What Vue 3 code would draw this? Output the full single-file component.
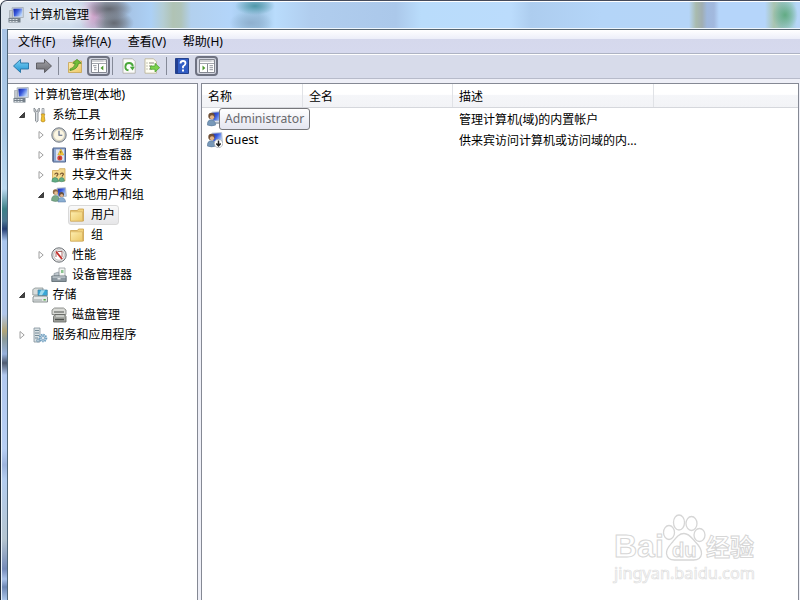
<template>
  <div class="window">
    <svg class="icon-defs" width="0" height="0" aria-hidden="true">
      <defs>
        <linearGradient id="g-blue" x1="0" y1="0" x2="0" y2="1">
          <stop offset="0" stop-color="#7cd0f4" />
          <stop offset="1" stop-color="#1f93d2" />
        </linearGradient>
        <linearGradient id="g-gray" x1="0" y1="0" x2="0" y2="1">
          <stop offset="0" stop-color="#a3a3a8" />
          <stop offset="1" stop-color="#68686e" />
        </linearGradient>
        <linearGradient id="g-folder" x1="0" y1="0" x2="1" y2="1">
          <stop offset="0" stop-color="#fdeeb0" />
          <stop offset="1" stop-color="#ecc867" />
        </linearGradient>
        <linearGradient id="g-screen" x1="0" y1="0" x2="1" y2="0.6">
          <stop offset="0" stop-color="#1420a0" />
          <stop offset="0.5" stop-color="#3a5bdc" />
          <stop offset="1" stop-color="#b8d4fb" />
        </linearGradient>
      </defs>
      <symbol id="computer" viewBox="0 0 16 16">
        <path d="M4 .8 15.300.5V10.500H5z" fill="#d5dbe3" stroke="#9aa3ae" stroke-width=".7" />
        <path d="M5.300 1.800 14.300 1.500v8H6z" fill="url(#g-screen)" />
        <path d="M1.500 3.500h3v7.500h-3z" fill="#c3c9cf" stroke="#8b939b" stroke-width=".5" />
        <path d="M.5 11h12v4.500H.5z" fill="#75808a" />
        <path d="M1.500 12h2v1h-2zm3 0h2v1h-2zm3 0h2v1h-2zM1.500 14h2v1h-2zm3 0h2v1h-2zm3 0h2v1h-2z" fill="#dce2e6" />
      </symbol>
      <symbol id="tools" viewBox="0 0 16 16">
        <path d="M2 1v3.500l1.500 1V14q1 2 2.500 0V5.500l1.300-1V1L5.800 2.500v1.800H3.700V2.500z" fill="#dde0e3" stroke="#747b82" stroke-width=".8" />
        <path d="M10 1.500h2V7h-2z" fill="#e4e6e8" stroke="#858b91" stroke-width=".7" />
        <path d="M9.200 7h3.600l-.6 2 .8 5q-2 2-4 0l.8-5z" fill="#f2c332" stroke="#b4861b" stroke-width=".7" />
      </symbol>
      <symbol id="clock" viewBox="0 0 16 16">
        <circle cx="8" cy="8" r="7.200" fill="#c0c4c8" stroke="#777e85" />
        <circle cx="8" cy="8" r="5.500" fill="#fbf6e3" stroke="#d5cba9" stroke-width=".6" />
        <path d="M8 3.800V8.300h3.300" fill="none" stroke="#4f5f83" stroke-width="1.100" />
      </symbol>
      <symbol id="events" viewBox="0 0 16 16">
        <path d="M2 1h12.500v14H2z" fill="#8fa9d3" stroke="#51648d" />
        <path d="M5 2.500h8v11H5z" fill="#dfe4ef" />
        <path d="M9.800 2 12.800 8H6.800z" fill="#ffd83b" stroke="#b88b18" stroke-width=".5" />
        <circle cx="8.800" cy="11" r="2.500" fill="#d9423c" />
        <path d="M9.800 4v2.500M8.800 9.800v2.400" stroke="#5c3518" stroke-width=".8" />
        <path d="M1 3h2M1 5h2M1 7h2M1 9h2M1 11h2M1 13h2" stroke="#39496b" stroke-width=".8" />
      </symbol>
      <symbol id="folder" viewBox="0 0 16 16">
        <path d="M1.500 3.500h7l1-1.500h5v12h-13z" fill="#f2d27c" stroke="#c9a04a" stroke-width=".8" />
        <path d="M1.500 4.800h12v9.300h-12z" fill="url(#g-folder)" stroke="#d4ae5b" stroke-width=".7" />
      </symbol>
      <symbol id="shared" viewBox="0 0 16 16">
        <path d="M1.500 3.500h6l1-1.800h5.500V14H1.500z" fill="#f4d98b" stroke="#d0aa55" stroke-width=".8" />
        <path d="M3.500 7.500Q5.500 5 7 7L5.500 9.500M9 7.500q2-2.500 3.500-.5L11 9.500" fill="none" stroke="#795832" stroke-width="1.200" />
        <path d="M.8 14.500q0-4 3.200-4t3.500 4q-3.200 1.500-6.700 0zM7.800 14q.3-3.500 2.900-3.500 2.600 0 2.800 3.500-3 1.500-5.700 0z" fill="#62ad83" stroke="#397e62" stroke-width=".5" />
      </symbol>
      <symbol id="users" viewBox="0 0 16 16">
        <path d="M6 1.200 14.500.8l.8 8.500H7z" fill="url(#g-screen)" stroke="#b0bac8" />
        <circle cx="4.500" cy="5" r="2.700" fill="#8c6845" />
        <circle cx="5" cy="6" r="1.800" fill="#e6bc90" />
        <path d="M.5 13.500Q.5 8.500 4.500 8.500q3.500 0 4 5-4 2-8 0z" fill="#79a987" stroke="#4e7963" stroke-width=".5" />
        <circle cx="10.500" cy="7.500" r="2.500" fill="#66513f" />
        <circle cx="10.700" cy="8.500" r="1.600" fill="#dfb18b" />
        <path d="M7 15q0-4.500 3.600-4.500 3.400 0 4 4.500z" fill="#8aaed2" stroke="#54779f" stroke-width=".5" />
      </symbol>
      <symbol id="user" viewBox="0 0 16 16">
        <path d="M5 1.200 14.700.7l.6 9.300H6z" fill="url(#g-screen)" stroke="#b6c2d2" />
        <path d="M8 11h6v2H8z" fill="#aab5c2" />
        <circle cx="4.500" cy="5" r="3.200" fill="#715036" />
        <circle cx="5" cy="6.300" r="2.100" fill="#e4b588" />
        <path d="M.3 14Q.3 8.800 4 8.800q4 0 4.700 5.200-4 1.800-8.400 0z" fill="#7899b9" stroke="#4e6f91" stroke-width=".5" />
      </symbol>
      <symbol id="user-disabled" viewBox="0 0 16 16">
        <use href="#user" />
        <circle cx="11.500" cy="11.500" r="4.200" fill="#fff" stroke="#9da3aa" stroke-width=".7" />
        <path d="M11.500 8.500v5M9.300 11.500l2.200 2.300 2.200-2.300" fill="none" stroke="#222" stroke-width="1.500" />
      </symbol>
      <symbol id="perf" viewBox="0 0 16 16">
        <circle cx="8" cy="8" r="7.200" fill="#e3e3e3" stroke="#6e7378" />
        <circle cx="8" cy="8" r="5.200" fill="#fff" stroke="#a2a2a2" stroke-width=".6" />
        <path d="M5 6v4M6.500 4.500h4.500V10" fill="none" stroke="#9b5a58" stroke-width=".9" />
        <path d="m5 4.500 6 7.500" stroke="#c22d29" stroke-width="1.800" />
      </symbol>
      <symbol id="device" viewBox="0 0 16 16">
        <path d="M8 1h6v9H8z" fill="#f4f6f3" stroke="#8b9196" stroke-width=".7" />
        <path d="M10 3h2.500v3H10z" fill="#8bc48f" />
        <path d="M3 6.500 7.500 5 8 9H3z" fill="#bec6cc" stroke="#7e8991" stroke-width=".6" />
        <path d="M.8 9h14.400v5.500H.8z" fill="#8b979f" stroke="#57636b" stroke-width=".8" />
        <path d="M1.500 10h13" stroke="#dce2e5" />
        <path d="M6.500 11h3v1.500h-3z" fill="#e2e6e8" />
      </symbol>
      <symbol id="storage" viewBox="0 0 16 16">
        <path d="M.8 2.500 3 1h8v7H.8z" fill="#d8dcdb" stroke="#7b8686" stroke-width=".7" />
        <path d="M6 3h9.300v5.500H6z" fill="#38a8d8" stroke="#437f9d" stroke-width=".7" />
        <path d="M9 3.300h4l-3 5H7z" fill="#9fdbef" />
        <path d="M1 10 2.500 9h12l1 1v5H1z" fill="#e5e8e8" stroke="#6f7979" stroke-width=".8" />
        <path d="M2 13h8" stroke="#9ca4a5" />
        <path d="M11.500 12h2.300v1.500h-2.300z" fill="#50ae45" />
      </symbol>
      <symbol id="disk" viewBox="0 0 16 16">
        <path d="M1 3 3.500 1h9L15 3v4.500H1z" fill="#d9dad6" stroke="#777a76" stroke-width=".8" />
        <path d="M3 5h10" stroke="#6f716d" stroke-width="1.300" />
        <path d="M2.500 9.500 4 7.500h9.500l1.500 2v5.500H2.500z" fill="#a5a7a2" stroke="#5e605c" stroke-width=".8" />
        <path d="M5 9h8" stroke="#eceeea" />
        <path d="M4 12.500h9" stroke="#4d4f4b" stroke-width="1.400" />
      </symbol>
      <symbol id="services" viewBox="0 0 16 16">
        <path d="M2 1h6v14H2z" fill="#d9e1e4" stroke="#81909a" stroke-width=".8" />
        <path d="M3 3.500h4M3 6h4M3 8.500h4M3 11h3" stroke="#6b828e" stroke-width=".9" />
        <circle cx="11" cy="11" r="3.300" fill="#c6dae8" stroke="#6f9fc0" stroke-width="2" stroke-dasharray="1.400 .8" />
        <circle cx="11" cy="11" r="1.500" fill="#fff" stroke="#6692b2" stroke-width=".7" />
        <circle cx="6" cy="13.500" r="1.500" fill="#b5cad8" stroke="#7899ae" stroke-width=".8" />
      </symbol>
      <symbol id="back" viewBox="0 0 16 16">
        <path d="M.5 8 7.500 1.500v3.500h8v6h-8v3.500z" fill="url(#g-blue)" stroke="#2472a3" stroke-width=".9" />
      </symbol>
      <symbol id="forward" viewBox="0 0 16 16">
        <path d="M15.500 8 8.500 1.500V5H.5v6h8v3.500z" fill="url(#g-gray)" stroke="#58585c" stroke-width=".9" />
      </symbol>
      <symbol id="up" viewBox="0 0 16 16">
        <path d="M1.500 4.500h4L6.800 3H14.500v11.500h-13z" fill="url(#g-folder)" stroke="#c7a24e" stroke-width=".8" />
        <path d="M3 11q4.500-1 5.200-5.500L5.800 5.300 10 1.300l4.200 3.900-2.700.2Q10.500 11.500 3 12.500z" fill="#73bd38" stroke="#40821e" stroke-width=".7" />
      </symbol>
      <symbol id="tree-pane" viewBox="0 0 16 14">
        <path d="M.5.500h15v13H.5z" fill="#fff" stroke="#858992" />
        <path d="M1 2h14M1 4.500h14" stroke="#969aa3" stroke-width=".9" />
        <path d="M7.500 5v8" stroke="#858992" />
        <path d="M2 6.700h3.500M3 8.700h2.500M3 10.700h2.500" stroke="#858992" stroke-width=".9" />
        <path d="M12.300 6.500v5L9.500 9z" fill="#4d9a2e" />
        <path d="M12.500 2h2" stroke="#fff" />
      </symbol>
      <symbol id="action-pane" viewBox="0 0 16 14">
        <path d="M.5.500h15v13H.5z" fill="#fff" stroke="#858992" />
        <path d="M1 2h14M1 4.500h14" stroke="#969aa3" stroke-width=".9" />
        <path d="M8.500 5v8" stroke="#858992" />
        <path d="M10.500 6.700H14M10.500 8.700H14M10.500 10.700H14" stroke="#858992" stroke-width=".9" />
        <path d="M3.500 6.500v5L6.300 9z" fill="#4d9a2e" />
        <path d="M12.500 2h2" stroke="#fff" />
      </symbol>
      <symbol id="refresh" viewBox="0 0 16 16">
        <path d="M2 .8h9.500L14.200 3.500v11.700H2z" fill="#fbfcfa" stroke="#a9aaa3" stroke-width=".8" />
        <path d="M7.500 12.300A3.700 3.700 0 1 1 11.800 8.500" fill="none" stroke="#4aa73b" stroke-width="1.900" />
        <path d="M8.800 8.800h5L11.500 12.500z" fill="#4aa73b" />
      </symbol>
      <symbol id="export" viewBox="0 0 16 16">
        <path d="M1 .8h8.500l3 3v11.400H1z" fill="#fffef3" stroke="#b6ae90" stroke-width=".8" />
        <path d="M2.500 5h1M2.500 8h1M2.500 11h1M5 5h5M5 8h3M5 11h3" stroke="#8a8c7c" />
        <path d="M6.500 8H11V5.300l4.600 4.400L11 14v-2.700H6.500z" fill="#7bd24c" stroke="#459c28" stroke-width=".7" />
      </symbol>
      <symbol id="help" viewBox="0 0 14 16">
        <path d="M.5.500h13v15H.5z" fill="#315dc4" stroke="#24428d" />
        <path d="M1 1h2v14H1z" fill="#233f91" />
        <path d="M5.500 5.500q0-2.500 2.500-2.500t2.500 2.200Q10.500 7 8 8.500v1.700" fill="none" stroke="#fff" stroke-width="1.800" />
        <path d="M7 11.500h2v2H7z" fill="#fff" />
      </symbol>
    </svg>

    <header class="title-bar">
      <svg class="icon"><use href="#computer" /></svg>
      <span>计算机管理</span>
    </header>

    <div class="client">
      <nav class="menu-bar">
        <span v-for="menu in menus" :key="menu" class="menu">{{ menu }}</span>
      </nav>

      <div class="toolbar">
        <svg class="icon back"><use href="#back" /></svg>
        <svg class="icon forward"><use href="#forward" /></svg>
        <i class="separator"></i>
        <svg class="icon up"><use href="#up" /></svg>
        <button class="toggle"><svg><use href="#tree-pane" /></svg></button>
        <i class="separator after-toggle"></i>
        <svg class="icon refresh"><use href="#refresh" /></svg>
        <svg class="icon export"><use href="#export" /></svg>
        <i class="separator"></i>
        <svg class="icon help"><use href="#help" /></svg>
        <button class="toggle"><svg><use href="#action-pane" /></svg></button>
      </div>

      <div class="panes">
        <aside class="tree">
          <div
            v-for="node in nodes"
            :key="node.label"
            class="node"
            :class="['level-' + node.level, { selected: node.selected }]"
          >
            <span v-if="node.level === 1 || node.level === 2" class="arrow">
              <svg v-if="node.state === 'open'" viewBox="0 0 8 8"><path d="M6.500 1.500v5h-5z" fill="#444" stroke="#222" stroke-width=".8" /></svg>
              <svg v-else-if="node.state === 'closed'" viewBox="0 0 8 8"><path d="M2 .5v7L6.200 4z" fill="#fff" stroke="#a0a0a0" /></svg>
            </span>
            <span class="node-body">
              <svg class="icon"><use :href="'#' + node.icon" /></svg>
              <span class="label">{{ node.label }}</span>
            </span>
          </div>
        </aside>

        <main class="list">
          <div class="list-row list-head">
            <span>名称</span>
            <span>全名</span>
            <span>描述</span>
            <span></span>
          </div>
          <div v-for="user in users" :key="user.name" class="list-row">
            <span class="name">
              <svg class="icon"><use :href="'#' + user.icon" /></svg>
              <span v-if="user.tip" class="tip">{{ user.name }}</span>
              <span v-else>{{ user.name }}</span>
            </span>
            <span></span>
            <span class="description">{{ user.description }}</span>
          </div>
        </main>
      </div>
    </div>

    <div class="watermark">
      <svg class="paw" viewBox="0 0 46 50">
        <ellipse cx="8" cy="18.500" rx="5.500" ry="7" />
        <ellipse cx="18" cy="8.500" rx="5.500" ry="7.500" />
        <ellipse cx="30.500" cy="9.500" rx="5.500" ry="7" />
        <ellipse cx="38.500" cy="21" rx="5.500" ry="6.500" />
        <path d="M23 19.500c5 0 7.500 4 11 8 4 4 7 7.500 6.500 12.500-.5 4-4 6-8 6h-19c-4.500 0-7.500-2.500-8-6.500-.5-5 3-8 6.500-12 3.500-4.500 6-8 11-8z" />
      </svg>
      <span class="mark bai">Bai</span>
      <span class="mark du">du</span>
      <span class="mark jingyan">经验</span>
      <span class="mark site">jingyan.baidu.com</span>
    </div>
  </div>
</template>

<script setup>
const menus = ['文件(F)', '操作(A)', '查看(V)', '帮助(H)']

const nodes = [
  { label: '计算机管理(本地)', level: 0, icon: 'computer' },
  { label: '系统工具', level: 1, icon: 'tools', state: 'open' },
  { label: '任务计划程序', level: 2, icon: 'clock', state: 'closed' },
  { label: '事件查看器', level: 2, icon: 'events', state: 'closed' },
  { label: '共享文件夹', level: 2, icon: 'shared', state: 'closed' },
  { label: '本地用户和组', level: 2, icon: 'users', state: 'open' },
  { label: '用户', level: 3, icon: 'folder', selected: true },
  { label: '组', level: 3, icon: 'folder' },
  { label: '性能', level: 2, icon: 'perf', state: 'closed' },
  { label: '设备管理器', level: 2, icon: 'device' },
  { label: '存储', level: 1, icon: 'storage', state: 'open' },
  { label: '磁盘管理', level: 2, icon: 'disk' },
  { label: '服务和应用程序', level: 1, icon: 'services', state: 'closed' }
]

const users = [
  { name: 'Administrator', icon: 'user', description: '管理计算机(域)的内置帐户', tip: true },
  { name: 'Guest', icon: 'user-disabled', description: '供来宾访问计算机或访问域的内...' }
]
</script>

<style>
body {
  overflow: hidden;
}
</style>

<style scoped>
.window {
  position: relative;
  box-sizing: border-box;
  width: 800px;
  height: 600px;
  overflow: hidden;
  padding-left: 7px;
  border-top: 1px solid #454b5b;
  border-left: 1px solid #1f2a38;
  border-top-left-radius: 7px;
  background:
    linear-gradient(#fff, #fff) 0 0 / 100% 1px no-repeat,
    linear-gradient(90deg, #e8f2fb 0 1px, transparent 1px) 0 28px / 7px 572px no-repeat,
    linear-gradient(180deg, #a9c4e6 0, #a9c9e6 100px, #bcd9f0 160px, #3c8087 180px, #4c7691 192px, #243e72 200px, #a9c6ee 212px, #b0c6ea 285px, #b1a578 302px, #8b9a99 310px, #96b1dd 325px, #4f5b70 334px, #b1c8ef 346px, #b7cff4 420px, #9db4dd 436px, #b3cdf0 450px, #b5c5d0 510px, #758bb9 540px, #a9c1e8 550px, #6d87b4 558px, #b0cbee 572px) 0 28px / 7px 572px no-repeat,
    radial-gradient(ellipse 20px 9px at 254px 5px, #4f98a8, transparent),
    radial-gradient(ellipse 22px 12px at 250px 22px, #8fb0cf, transparent),
    radial-gradient(ellipse 24px 10px at 108px 8px, #646871, transparent),
    radial-gradient(ellipse 20px 12px at 113px 22px, #656a73, transparent),
    radial-gradient(ellipse 14px 20px at 92px 14px, #cf9dc8, transparent),
    radial-gradient(ellipse 13px 15px at 784px 14px, #62ab84, transparent),
    linear-gradient(90deg, #dde4ec 0, #cfdeee 70px, #c5d0e4 88px, #9fa9b8 105px, #9aa9bd 116px, #a6c4e6 128px, #acd0f5 150px, #b4cdd4 162px, #b0c3b4 172px, #afc4ba 180px, #b2d0ee 190px, #b3d5fa 230px, #a4cbea 246px, #a0c5e4 258px, #b9dcfc 274px, #b0cdee 310px, #abc8ea 395px, #b9dcfb 420px, #bbdcfc 510px, #adcdef 530px, #b4d5f8 600px, #b5d5f8 688px, #a9bbae 695px, #a0aeb2 701px, #9fb8dd 706px, #a2b9de 713px, #b5d5fa 718px, #b5d5fa 764px, #a9c4b0 773px, #9cc3c0 780px, #a5cfd8 790px, #b6d6f8 796px);
  font-family: "Noto Sans", "Noto Sans CJK SC", sans-serif;
  font-size: 12px;
  color: #000;
}

.icon-defs {
  position: absolute;
}

.icon {
  flex: none;
  display: block;
  width: 16px;
  height: 16px;
}

.title-bar {
  display: flex;
  align-items: center;
  box-sizing: border-box;
  height: 28px;
  gap: 5px;
  border-bottom: 1px solid #eef6fd;
  line-height: 26px;
}

.title-bar span {
  text-shadow: 0 0 8px #fff, 0 0 8px #fff;
}

.client {
  display: flex;
  flex-direction: column;
  box-sizing: border-box;
  height: 571px;
  margin-left: -1px;
  border-top: 1px solid #566571;
  border-left: 1px solid #4f6679;
  background: #eeeff7;
}

.menu-bar {
  display: flex;
  align-items: center;
  gap: 16.7px;
  box-sizing: border-box;
  height: 24px;
  padding-left: 10px;
  border-bottom: 1px solid #aeb3c3;
  background: linear-gradient(#fff 0, #eceef9 9px, #d5d8ec 9px, #d6d9ee 100%);
}

.menu {
  line-height: 22px;
  white-space: nowrap;
}

.toolbar {
  display: flex;
  align-items: center;
  box-sizing: border-box;
  height: 25px;
  padding: 0 0 2px 5px;
  border-top: 1px solid #fff;
  border-bottom: 1px solid #b7bbca;
  background: #d7dbea;
}

.forward {
  margin-left: 7px;
}

.separator {
  width: 1px;
  height: 18px;
  margin-left: 6px;
  background: #858a98;
}

.after-toggle {
  margin-left: 2px;
}

.up {
  margin-left: 8px;
}

.toggle {
  display: flex;
  align-items: center;
  justify-content: center;
  box-sizing: border-box;
  width: 23px;
  height: 20px;
  margin: 0 0 0 4px;
  padding: 0;
  border: 2px solid #6e7281;
  border-radius: 4px;
  background: #d2d5e0;
}

.toggle svg {
  width: 16px;
  height: 14px;
}

.refresh {
  margin-left: 8px;
}

.export {
  margin-left: 7px;
}

.help {
  width: 14px;
  margin-left: 8px;
}

.help + .toggle {
  margin-left: 6px;
}

.panes {
  display: flex;
  flex: 1;
  gap: 3px;
  min-height: 0;
  padding: 4px 1px 0 0;
}

.tree {
  box-sizing: border-box;
  width: 190px;
  padding-top: 1px;
  border-top: 1px solid #858994;
  border-right: 1px solid #858994;
  background: #fff;
}

.node {
  display: flex;
  align-items: center;
  height: 20px;
}

.level-0 {
  padding-left: 5px;
}

.level-1 {
  padding-left: 10px;
}

.level-2 {
  padding-left: 29px;
}

.level-3 {
  padding-left: 60px;
}

.arrow {
  width: 8px;
  height: 8px;
  margin-right: 6px;
}

.arrow svg {
  display: block;
  width: 8px;
  height: 8px;
}

.node-body {
  display: flex;
  align-items: center;
  gap: 5px;
  line-height: 18px;
  white-space: nowrap;
}

.level-1 .node-body {
  gap: 4.5px;
}

.level-3 .node-body {
  gap: 6px;
  box-sizing: border-box;
  height: 20px;
  padding: 0 3px 0 0;
  border: 1px solid transparent;
}

.selected .node-body {
  border-color: #d9d9d9;
  border-radius: 3px;
  background: linear-gradient(#f9f9f9, #e6e6e8);
}

.list {
  flex: 1;
  border: 1px solid #858994;
  border-bottom: 0;
  background: #fff;
}

.list-row {
  display: grid;
  grid-template-columns: 101px 150px 201px 1fr;
  align-items: center;
  height: 21px;
}

.list-row > span {
  padding-left: 6px;
  white-space: nowrap;
}

.list-head {
  box-sizing: border-box;
  height: 24px;
  border-bottom: 1px solid #d5d7dc;
  background: linear-gradient(#fff 0, #fff 45%, #f5f6f9 50%, #f2f3f6 100%);
}

.list-head > span {
  box-sizing: border-box;
  height: 23px;
  border-right: 1px solid #e0e2e6;
  line-height: 25px;
}

.list-head > span:last-child {
  border-right: 0;
}

.list-row > .name {
  position: relative;
  display: flex;
  align-items: center;
  gap: 2px;
  padding-left: 5px;
}

.name {
  font-family: "Noto Sans", sans-serif;
  font-size: 12.2px;
}

.tip {
  position: absolute;
  top: -3px;
  left: 17px;
  box-sizing: border-box;
  height: 22px;
  padding: 0 5px;
  border: 1px solid #77777b;
  border-radius: 3px;
  background: linear-gradient(#fff, #e4e5f0);
  color: #68686c;
  line-height: 20px;
}

.watermark {
  position: absolute;
  top: 512px;
  left: 611px;
  width: 150px;
  height: 75px;
  color: #fff;
}

.paw {
  position: absolute;
  top: 1px;
  left: 49px;
  width: 46px;
  height: 50px;
  fill: #fff;
  stroke: #d6d6d6;
  stroke-width: 1.3;
}

.mark {
  position: absolute;
  white-space: nowrap;
  line-height: 1;
  -webkit-text-stroke: 1px #d6d6d6;
}

.bai {
  top: 17px;
  left: 2px;
  font: bold 32px/1 "Liberation Sans", sans-serif;
}

.du {
  top: 27px;
  left: 60px;
  font: bold 20px/1 "Liberation Sans", sans-serif;
}

.jingyan {
  top: 21px;
  left: 94px;
  font: bold 24px/1 "Noto Sans CJK SC", sans-serif;
}

.site {
  top: 52px;
  left: 2px;
  font: 16.3px/1 "Noto Sans", sans-serif;
  -webkit-text-stroke: 0.7px #dedede;
}
</style>
